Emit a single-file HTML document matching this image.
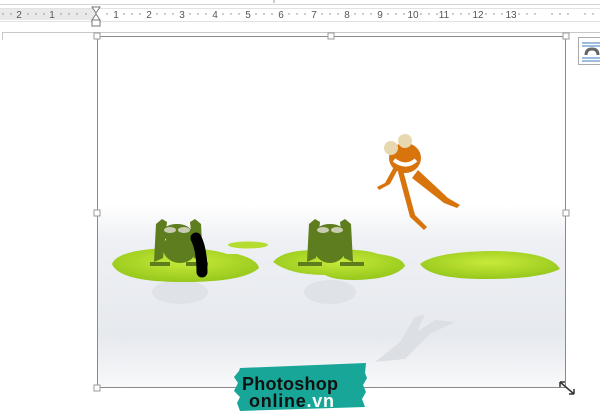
<!DOCTYPE html>
<html><head><style>
body{margin:0;width:600px;height:417px;overflow:hidden;background:#fff;font-family:"Liberation Sans",sans-serif;position:relative}
.abs{position:absolute}
</style></head><body>
<div class="abs" style="left:0;top:0;width:600px;height:4px;border-bottom:1px solid #d6d6d6"></div>
<div class="abs" style="left:0;top:8px;width:600px;height:12px;background:#fff;border-top:1px solid #e2e2e2;border-bottom:1px solid #e2e2e2"></div>
<div class="abs" style="left:0;top:9px;width:96px;height:11px;background:#e9e9e9"></div>
<svg class="abs" style="left:0;top:0" width="600" height="40">
<g font-size="10" fill="#555" font-family="Liberation Sans" text-anchor="middle">
<text x="19" y="18">2</text><text x="52" y="18">1</text>
<text x="116" y="18">1</text><text x="149" y="18">2</text><text x="182" y="18">3</text><text x="215" y="18">4</text><text x="248" y="18">5</text><text x="281" y="18">6</text><text x="314" y="18">7</text><text x="347" y="18">8</text><text x="380" y="18">9</text><text x="413" y="18">10</text><text x="444" y="18">11</text><text x="478" y="18">12</text><text x="511" y="18">13</text>
</g>
<g stroke="#999" stroke-width="1">
<path d="M3 13v2M11 13v2M28 13v2M36 13v2M44 13v2M61 13v2M69 13v2M77 13v2M86 13v2M107 13v2M124 13v2M132 13v2M140 13v2M157 13v2M165 13v2M173 13v2M190 13v2M198 13v2M206 13v2M223 13v2M231 13v2M239 13v2M256 13v2M264 13v2M272 13v2M289 13v2M297 13v2M305 13v2M322 13v2M330 13v2M338 13v2M355 13v2M363 13v2M371 13v2M388 13v2M396 13v2M404 13v2M421 13v2M429 13v2M437 13v2M453 13v2M461 13v2M469 13v2M486 13v2M494 13v2M502 13v2M519 13v2M527 13v2M535 13v2M552 13v2M560 13v2M568 13v2M585 13v2M593 13v2"/>
<path d="M274 0v3"/>
</g>
<path d="M92 7h8l-4 6zM92 20h8l-4-6z" fill="#fff" stroke="#777"/>
<rect x="92" y="20" width="8" height="6" fill="#fff" stroke="#777"/>
<path d="M2 32.5h598M2.5 32v390" stroke="#c8c8c8"/>
</svg>
<svg class="abs" style="left:0;top:0" width="600" height="417">
<defs>
<linearGradient id="bg" x1="0" y1="0" x2="0" y2="1">
<stop offset="0" stop-color="#fff"/><stop offset="0.48" stop-color="#fff"/>
<stop offset="0.58" stop-color="#eef0f4"/><stop offset="0.85" stop-color="#e6e9ee"/><stop offset="1" stop-color="#f8f9fa"/>
</linearGradient>
<radialGradient id="pad" cx="0.5" cy="0.4" r="0.6"><stop offset="0" stop-color="#c8ea3a"/><stop offset="1" stop-color="#96c81c"/></radialGradient>
</defs>
<rect x="97" y="36" width="469" height="352" fill="url(#bg)"/>
<!-- reflections -->
<ellipse cx="180" cy="292" rx="28" ry="12" fill="#dfe2e6"/>
<ellipse cx="330" cy="292" rx="26" ry="12" fill="#dfe2e6"/>
<path d="M375 362l25-20 15-25 10-3-8 18 18-12 20 2-25 12-25 25z" fill="#dcdfe3"/>
<!-- pads -->
<path d="M112 264q5-14 55-16q45 0 60 6l10 0q20 5 22 14q-15 14-75 14q-65 0-72-18z" fill="url(#pad)"/>
<ellipse cx="248" cy="245" rx="20" ry="3.5" fill="#b5dc30"/>
<path d="M273 262q10-13 50-12q40-2 55 4q25 3 27 12q-10 13-50 14q-22 0-30-5q-35 0-52-13z" fill="url(#pad)"/>
<path d="M420 264q15-12 70-13q60 0 70 18q-20 10-75 10q-55 0-65-15z" fill="url(#pad)"/>
<!-- green frogs -->
<g fill="#5d7d1e"><ellipse cx="180" cy="248" rx="17" ry="15"/><ellipse cx="177" cy="233" rx="15" ry="9"/><path d="M154 262l2-38 6-5 5 3-4 36zM203 262l-2-38-6-5-5 3 4 36zM150 262h20v4h-20zM186 262h22v4h-22z"/></g>
<g fill="#5d7d1e"><ellipse cx="330" cy="248" rx="16" ry="15"/><ellipse cx="330" cy="233" rx="15" ry="9"/><path d="M307 262l2-38 6-5 5 3-4 36zM353 262l-2-38-6-5-5 3 4 36zM298 262h24v4h-24zM340 262h24v4h-24z"/></g>
<g fill="#c8ccb0"><ellipse cx="170" cy="230" rx="6" ry="3"/><ellipse cx="184" cy="230" rx="6" ry="3"/><ellipse cx="323" cy="230" rx="6" ry="3"/><ellipse cx="337" cy="230" rx="6" ry="3"/></g>
<path d="M196 238q6 12 6 34" stroke="#000" stroke-width="11" stroke-linecap="round" fill="none"/>
<!-- orange frog -->
<g fill="#d8740c"><ellipse cx="405" cy="158" rx="16" ry="15"/><circle cx="391" cy="148" r="7" fill="#e8d8b0"/><circle cx="405" cy="141" r="7" fill="#e8d8b0"/><path d="M403 170l12 45 12 12-3 3-14-13-12-45zM418 170l30 28 12 7-3 3-13-5-32-25zM395 165l-10 18-8 4 2 3 11-6 8-15z"/></g>
<path d="M394 160q12 9 22 0" stroke="#fff" stroke-width="4" fill="none"/>
<!-- frame -->
<rect x="97.5" y="36.5" width="468" height="351" fill="none" stroke="#8a8a8a"/>
<g fill="#fff" stroke="#999"><rect x="94" y="33" width="6" height="6"/><rect x="328" y="33" width="6" height="6"/><rect x="563" y="33" width="6" height="6"/><rect x="94" y="210" width="6" height="6"/><rect x="563" y="210" width="6" height="6"/><rect x="94" y="385" width="6" height="6"/></g>
<path d="M560 382l14 12M560 382h5M560 382v5M574 394h-5M574 394v-5" stroke="#333" stroke-width="1.5" fill="none"/>
<!-- layout icon -->
<rect x="578.5" y="37.5" width="30" height="27" fill="#fff" stroke="#aaa"/>
<path d="M582 43h18M582 46h18M582 58h18M582 61h18" stroke="#3a78c0"/>
<path d="M586 55q0-6 6-6t6 6" stroke="#666" stroke-width="3" fill="none"/>
<!-- logo -->
<path d="M240 368l126-5-1 10 2 5-4 7 3 7-4 7 3 8-125 4-3-8 3-6-6-6 4-8-4-6 5-6z" fill="#17a697"/>
<text x="242" y="390" font-family="Liberation Sans" font-weight="bold" font-size="18" fill="#111" textLength="96">Photoshop</text>
<text x="249" y="407" font-family="Liberation Sans" font-weight="bold" font-size="18" fill="#111" textLength="85">online<tspan fill="#fff">.vn</tspan></text>
</svg>
</body></html>
